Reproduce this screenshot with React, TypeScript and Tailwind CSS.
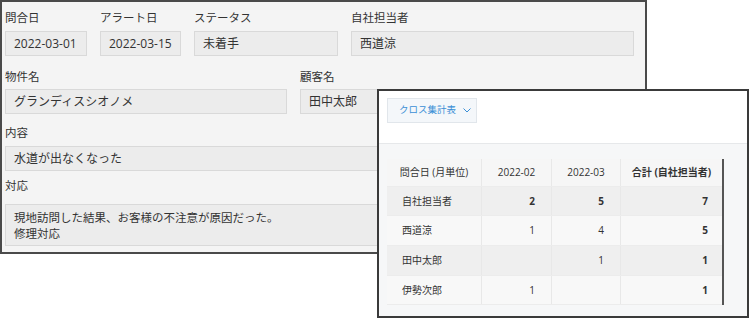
import React from "react";

const FONT = { fontFamily: '"Open Sans", "Noto Sans CJK JP", sans-serif' };

interface FieldProps {
  label: string;
  value: string;
  width: string;
  labelGap?: string;
}

const Field: React.FC<FieldProps> = ({ label, value, width, labelGap = "mb-[3px]" }) => (
  <div className={`flex flex-col ${width}`}>
    <div className={`h-[20px] leading-[20px] text-[11.5px] text-[#333] ${labelGap}`}>{label}</div>
    <div className="h-[25px] leading-[23px] px-[8px] text-[12px] text-[#333] bg-[#ececec] border border-[#d9d9d9] whitespace-nowrap overflow-hidden">
      {value}
    </div>
  </div>
);

const rows = [
  { name: "自社担当者", a: "2", b: "5", total: "7", bold: true, bg: "bg-[#efefef]", h: "h-[29px]" },
  { name: "西道涼", a: "1", b: "4", total: "5", bold: false, bg: "bg-[#f8f8f8]", h: "h-[30px]" },
  { name: "田中太郎", a: "", b: "1", total: "1", bold: false, bg: "bg-[#efefef]", h: "h-[30px]" },
  { name: "伊勢次郎", a: "1", b: "", total: "1", bold: false, bg: "bg-[#f8f8f8]", h: "h-[29px]" },
];

const DetailPanel = () => (
  <div className="absolute left-0 top-0 w-[647px] h-[254px] bg-[#f4f4f4] border-2 border-[#4a4a4a] pl-[3px] pt-[6px]">
    {/* ROW 1 */}
    <div className="flex gap-[13px]">
      <Field label="問合日" value="2022-03-01" width="w-[82px]" />
      <Field label="アラート日" value="2022-03-15" width="w-[81px]" />
      <Field label="ステータス" value="未着手" width="w-[144px]" />
      <Field label="自社担当者" value="西道涼" width="w-[283px]" />
    </div>
    {/* ROW 2 */}
    <div className="flex gap-[13px] mt-[11px]">
      <Field label="物件名" value="グランディスシオノメ" width="w-[282px]" labelGap="mb-[2px]" />
      <Field label="顧客名" value="田中太郎" width="w-[335px]" labelGap="mb-[2px]" />
    </div>
    {/* ROW 3 */}
    <div className="flex mt-[9px]">
      <Field label="内容" value="水道が出なくなった" width="w-[630px]" />
    </div>
    {/* ROW 4 */}
    <div className="flex flex-col w-[630px] mt-[5px]">
      <div className="h-[20px] leading-[20px] text-[11.5px] text-[#333] mb-[8px]">対応</div>
      <div className="h-[42px] px-[8px] pt-[5px] text-[11.5px] leading-[16px] text-[#333] bg-[#ececec] border border-[#d9d9d9]">
        <div>現地訪問した結果、お客様の不注意が原因だった。</div>
        <div>修理対応</div>
      </div>
    </div>
  </div>
);

const CrossPanel = () => (
  <div className="absolute left-[377px] top-[89px] w-[372px] h-[229px] bg-white border-2 border-[#3a3a3a] flex flex-col">
    <div className="h-[53px] pl-[8px] pt-[7px] border-b border-[#e6e8ea]">
      <div className="w-[90px] h-[25px] flex items-center pl-[11px] gap-[7px] bg-[#f4f7fa] border border-[#e1e6eb] text-[9.5px] text-[#3b8fd6] whitespace-nowrap">
        <span>クロス集計表</span>
        <svg width="8" height="5" viewBox="0 0 8 5">
          <polyline points="0.5,0.5 4,4 7.5,0.5" fill="none" stroke="#3b8fd6" strokeWidth="1" />
        </svg>
      </div>
    </div>
    <div className="flex-1 bg-[#f6f7f8] pl-[8px] pt-[15px]">
      <div className="flex w-[337px] border-r-2 border-[#555] text-[10px] text-[#333]">
        <div className="flex flex-col w-full">
          <div className="flex h-[28px] bg-[#f6f6f6] border-b border-[#ececec]">
            <div className="w-[95px] flex items-center justify-center border-r border-[#e8e8e8]">問合日 (月単位)</div>
            <div className="w-[70px] flex items-center justify-center border-r border-[#e8e8e8]">2022-02</div>
            <div className="w-[69px] flex items-center justify-center border-r border-[#e8e8e8]">2022-03</div>
            <div className="flex-1 flex items-center justify-center font-bold">合計 (自社担当者)</div>
          </div>
          {rows.map((r) => (
            <div key={r.name} className={`flex ${r.h} ${r.bg} border-b border-[#ececec]`}>
              <div className="w-[95px] flex items-center pl-[15px] border-r border-[#e8e8e8]">{r.name}</div>
              <div className={`w-[70px] flex items-center justify-end pr-[16px] border-r border-[#e8e8e8] ${r.bold ? "font-bold" : ""}`}>{r.a}</div>
              <div className={`w-[69px] flex items-center justify-end pr-[16px] border-r border-[#e8e8e8] ${r.bold ? "font-bold" : ""}`}>{r.b}</div>
              <div className="flex-1 flex items-center justify-end pr-[14px] font-bold">{r.total}</div>
            </div>
          ))}
        </div>
      </div>
    </div>
  </div>
);

export default function App() {
  return (
    <div className="relative w-[750px] h-[319px] bg-white overflow-hidden" style={FONT}>
      <DetailPanel />
      <CrossPanel />
    </div>
  );
}
